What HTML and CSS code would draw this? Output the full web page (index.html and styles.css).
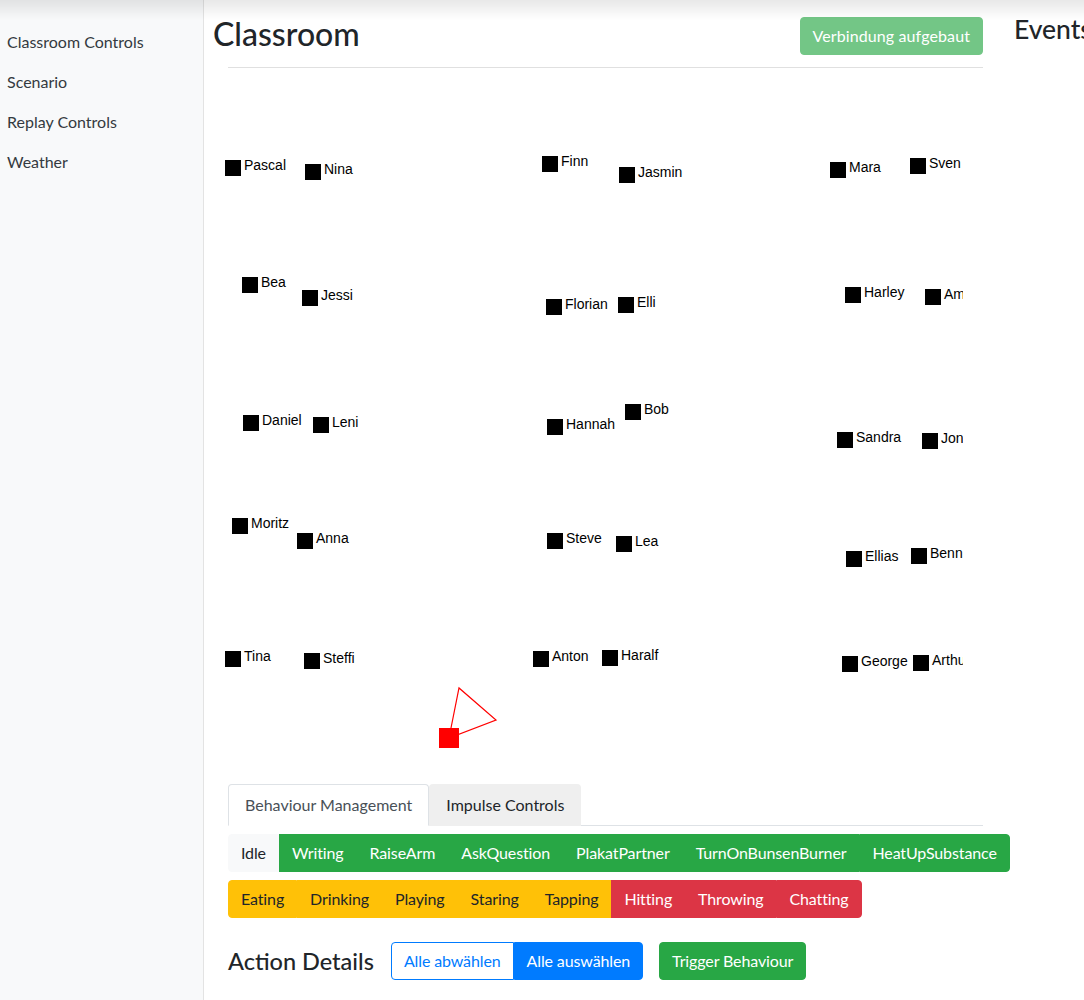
FILE: index.html
```html
<!DOCTYPE html>
<html lang="de">
<head>
<meta charset="utf-8">
<title>Classroom</title>
<link rel="stylesheet" href="styles.css">
</head>
<body>
<div class="topshade"></div>
<div class="layout">
  <aside class="sidebar">
    <nav class="side-nav">
      <a class="side-link" href="#">Classroom Controls</a>
      <a class="side-link" href="#">Scenario</a>
      <a class="side-link" href="#">Replay Controls</a>
      <a class="side-link" href="#">Weather</a>
    </nav>
  </aside>
  <main class="main">
    <section class="classroom">
      <header class="classroom-header">
        <h2 class="title">Classroom</h2>
        <button class="btn btn-success-disabled">Verbindung aufgebaut</button>
      </header>
      <hr class="rule">
      <div class="canvas">
        <svg class="teacher" width="750" height="706" viewBox="0 0 750 706">
          <polygon points="236,670 246,620 283,652" fill="none" stroke="#ff0000" stroke-width="1.2"/>
          <rect x="226" y="660" width="20" height="20" fill="#ff0000"/>
        </svg>
        <div class="student" style="left:12px;top:92px"><span class="seat"></span><span class="name">Pascal</span></div>
        <div class="student" style="left:92px;top:96px"><span class="seat"></span><span class="name">Nina</span></div>
        <div class="student" style="left:29px;top:209px"><span class="seat"></span><span class="name">Bea</span></div>
        <div class="student" style="left:89px;top:222px"><span class="seat"></span><span class="name">Jessi</span></div>
        <div class="student" style="left:329px;top:88px"><span class="seat"></span><span class="name">Finn</span></div>
        <div class="student" style="left:406px;top:99px"><span class="seat"></span><span class="name">Jasmin</span></div>
        <div class="student" style="left:333px;top:231px"><span class="seat"></span><span class="name">Florian</span></div>
        <div class="student" style="left:405px;top:229px"><span class="seat"></span><span class="name">Elli</span></div>
        <div class="student" style="left:617px;top:94px"><span class="seat"></span><span class="name">Mara</span></div>
        <div class="student" style="left:697px;top:90px"><span class="seat"></span><span class="name">Sven</span></div>
        <div class="student" style="left:632px;top:219px"><span class="seat"></span><span class="name">Harley</span></div>
        <div class="student" style="left:712px;top:221px"><span class="seat"></span><span class="name">Amelie</span></div>
        <div class="student" style="left:30px;top:347px"><span class="seat"></span><span class="name">Daniel</span></div>
        <div class="student" style="left:100px;top:349px"><span class="seat"></span><span class="name">Leni</span></div>
        <div class="student" style="left:334px;top:351px"><span class="seat"></span><span class="name">Hannah</span></div>
        <div class="student" style="left:412px;top:336px"><span class="seat"></span><span class="name">Bob</span></div>
        <div class="student" style="left:624px;top:364px"><span class="seat"></span><span class="name">Sandra</span></div>
        <div class="student" style="left:709px;top:365px"><span class="seat"></span><span class="name">Jonas</span></div>
        <div class="student" style="left:19px;top:450px"><span class="seat"></span><span class="name">Moritz</span></div>
        <div class="student" style="left:84px;top:465px"><span class="seat"></span><span class="name">Anna</span></div>
        <div class="student" style="left:334px;top:465px"><span class="seat"></span><span class="name">Steve</span></div>
        <div class="student" style="left:403px;top:468px"><span class="seat"></span><span class="name">Lea</span></div>
        <div class="student" style="left:633px;top:483px"><span class="seat"></span><span class="name">Ellias</span></div>
        <div class="student" style="left:698px;top:480px"><span class="seat"></span><span class="name">Benni</span></div>
        <div class="student" style="left:12px;top:583px"><span class="seat"></span><span class="name">Tina</span></div>
        <div class="student" style="left:91px;top:585px"><span class="seat"></span><span class="name">Steffi</span></div>
        <div class="student" style="left:320px;top:583px"><span class="seat"></span><span class="name">Anton</span></div>
        <div class="student" style="left:389px;top:582px"><span class="seat"></span><span class="name">Haralf</span></div>
        <div class="student" style="left:629px;top:588px"><span class="seat"></span><span class="name">George</span></div>
        <div class="student" style="left:700px;top:587px"><span class="seat"></span><span class="name">Arthur</span></div>
      </div>
      <ul class="tabs">
        <li class="tab tab-active">Behaviour Management</li>
        <li class="tab">Impulse Controls</li>
      </ul>
      <div class="btn-row">
        <div class="btn-group">
          <button class="btn btn-light">Idle</button>
          <button class="btn btn-success">Writing</button>
          <button class="btn btn-success">RaiseArm</button>
          <button class="btn btn-success">AskQuestion</button>
          <button class="btn btn-success">PlakatPartner</button>
          <button class="btn btn-success">TurnOnBunsenBurner</button>
          <button class="btn btn-success">HeatUpSubstance</button>
        </div>
      </div>
      <div class="btn-row">
        <div class="btn-group">
          <button class="btn btn-warning">Eating</button>
          <button class="btn btn-warning">Drinking</button>
          <button class="btn btn-warning">Playing</button>
          <button class="btn btn-warning">Staring</button>
          <button class="btn btn-warning">Tapping</button>
          <button class="btn btn-danger">Hitting</button>
          <button class="btn btn-danger">Throwing</button>
          <button class="btn btn-danger">Chatting</button>
        </div>
      </div>
      <div class="details-row">
        <h4 class="details-title">Action Details</h4>
        <div class="btn-group">
          <button class="btn btn-outline-primary">Alle abwählen</button>
          <button class="btn btn-primary">Alle auswählen</button>
        </div>
        <button class="btn btn-success trigger">Trigger Behaviour</button>
      </div>
    </section>
    <section class="events">
      <h3 class="events-title">Events</h3>
    </section>
  </main>
</div>
</body>
</html>
```

FILE: styles.css
```css
* { box-sizing: border-box; }

html, body {
  margin: 0;
  padding: 0;
  overflow: hidden;
}

body {
  font-family: "Lato", "Noto Sans", sans-serif;
  font-size: 16px;
  line-height: 1.5;
  color: #212529;
  background: #ffffff;
}

.topshade {
  position: fixed;
  top: 0;
  left: 0;
  right: 0;
  height: 20px;
  background: linear-gradient(rgba(0, 0, 0, 0.09), rgba(0, 0, 0, 0));
  pointer-events: none;
  z-index: 10;
}

.layout {
  display: flex;
  min-height: 1000px;
}

.sidebar {
  flex: 0 0 204px;
  width: 204px;
  background: #f8f9fa;
  border-right: 1px solid #e3e3e3;
  padding-top: 22px;
}

.side-nav {
  display: flex;
  flex-direction: column;
}

.side-link {
  display: block;
  padding: 8px 7px;
  line-height: 24px;
  color: #343a40;
  text-decoration: none;
}

.main {
  flex: 1 1 auto;
  display: flex;
  padding-left: 9px;
  min-width: 0;
}

.classroom {
  flex: 0 0 770px;
  width: 770px;
}

.classroom-header {
  display: flex;
  justify-content: space-between;
  align-items: flex-start;
  padding-top: 15px;
}

.title {
  margin: 0;
  font-size: 32px;
  font-weight: 500;
  line-height: 1.2;
}

.rule {
  margin: 12px 0 0 15px;
  border: 0;
  border-top: 1px solid #e0e0e0;
  height: 0;
}

.canvas {
  position: relative;
  width: 750px;
  height: 706px;
  overflow: hidden;
}

.teacher {
  position: absolute;
  left: 0;
  top: 0;
}

.student {
  position: absolute;
  width: 200px;
  height: 16px;
}

.seat {
  position: absolute;
  left: 0;
  top: 0;
  width: 16px;
  height: 16px;
  background: #000;
}

.name {
  position: absolute;
  left: 19px;
  top: -3px;
  font-family: "Liberation Sans", Arial, sans-serif;
  font-size: 14px;
  line-height: 16px;
  color: #000;
  white-space: nowrap;
}

.tabs {
  display: flex;
  list-style: none;
  margin: 10px 0 0 15px;
  padding: 0;
  border-bottom: 1px solid #dee2e6;
}

.tab {
  padding: 8px 16px;
  line-height: 24px;
  border: 1px solid transparent;
  border-top-left-radius: 4px;
  border-top-right-radius: 4px;
  margin-bottom: -1px;
  background: #efefef;
  color: #212529;
}

.tab-active {
  background: #ffffff;
  border-color: #dee2e6 #dee2e6 #ffffff;
  color: #495057;
}

.btn-row {
  margin: 8px 0 0 15px;
  display: flex;
  white-space: nowrap;
}

.btn-group {
  display: inline-flex;
  flex: none;
}

.btn {
  font-family: inherit;
  font-size: 16px;
  line-height: 24px;
  letter-spacing: -0.12px;
  padding: 6px 12px;
  border: 1px solid transparent;
  border-radius: 4px;
  white-space: nowrap;
  flex: none;
  cursor: pointer;
}

.btn-group .btn {
  border-radius: 0;
}

.btn-group .btn:first-child {
  border-top-left-radius: 4px;
  border-bottom-left-radius: 4px;
}

.btn-group .btn:last-child {
  border-top-right-radius: 4px;
  border-bottom-right-radius: 4px;
}

.btn-light { background: #f8f9fa; border-color: #f8f9fa; color: #212529; }
.btn-success { background: #28a745; border-color: #28a745; color: #fff; }
.btn-success-disabled {
  background: #73c686;
  border-color: #73c686;
  color: #fff;
  margin-top: 2px;
  letter-spacing: 0.1px;
}
.btn-warning { background: #ffc107; border-color: #ffc107; color: #212529; }
.btn-danger { background: #dc3545; border-color: #dc3545; color: #fff; }
.btn-primary { background: #007bff; border-color: #007bff; color: #fff; }
.btn-outline-primary { background: #fff; border-color: #007bff; color: #007bff; }

.btn-row + .btn-row { margin-top: 8px; }

.details-row {
  display: flex;
  align-items: center;
  margin: 24px 0 0 15px;
  white-space: nowrap;
}

.details-title {
  margin: 0 17px 0 0;
  font-size: 23.5px;
  font-weight: 500;
  line-height: 1.2;
}

.trigger {
  margin-left: 16px;
}

.events {
  flex: none;
  margin-left: 31px;
  padding-top: 14px;
}

.events-title {
  margin: 0;
  font-size: 26.5px;
  font-weight: 500;
  line-height: 1.2;
  white-space: nowrap;
}
```
